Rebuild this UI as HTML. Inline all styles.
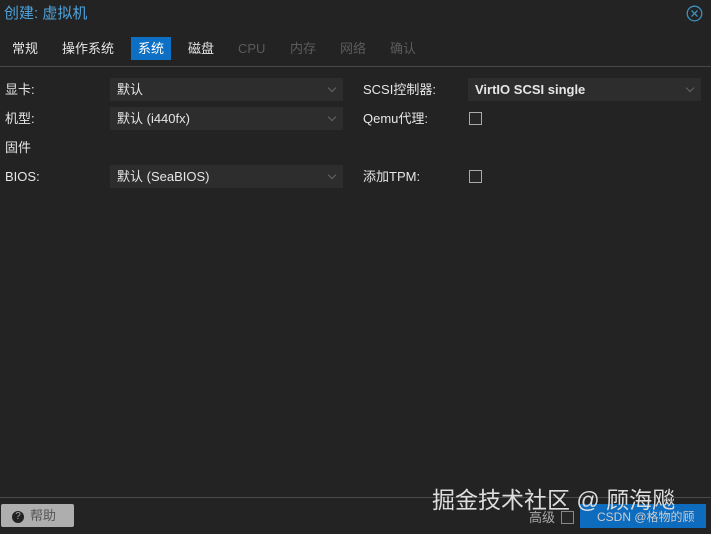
<!DOCTYPE html><html><head><meta charset="utf-8"><style>
body{margin:0;width:711px;height:534px;background:#232323;font-family:"Liberation Sans","Noto Sans CJK SC",sans-serif;color:#e6e6e6;position:relative;overflow:hidden;font-size:13px}
.a{position:absolute;white-space:nowrap;line-height:18px}
.sel{position:absolute;background:#2d2d2d;height:23px;line-height:23px;padding-left:7px;box-sizing:border-box;font-size:13px}
.sel:after{content:"";position:absolute;right:8px;top:7px;width:5px;height:5px;border-right:1px solid #666;border-bottom:1px solid #666;transform:rotate(45deg)}
.cb{position:absolute;width:11px;height:11px;border:1px solid #aaa;background:#262626}
</style></head><body>
<div class="a" style="left:4px;top:5px;font-size:15px;color:#4ea3dc">创建: 虚拟机</div>
<svg class="a" style="left:686px;top:5px" width="17" height="17"><circle cx="8.5" cy="8.5" r="7.3" fill="none" stroke="#3d8fc0" stroke-width="1.3"/><path d="M5.5 5.5L11.5 11.5M11.5 5.5L5.5 11.5" stroke="#3d8fc0" stroke-width="1.3"/></svg>
<div class="a" style="left:12px;top:40px">常规</div>
<div class="a" style="left:62px;top:40px">操作系统</div>
<div class="a" style="left:131px;top:37px;width:40px;height:23px;background:#0e70c4;color:#fff;text-align:center;line-height:23px">系统</div>
<div class="a" style="left:188px;top:40px">磁盘</div>
<div class="a" style="left:238px;top:40px;color:#5b5b5b">CPU</div>
<div class="a" style="left:290px;top:40px;color:#5b5b5b">内存</div>
<div class="a" style="left:340px;top:40px;color:#5b5b5b">网络</div>
<div class="a" style="left:390px;top:40px;color:#5b5b5b">确认</div>
<div class="a" style="left:0;top:66px;width:711px;height:1px;background:#484848"></div>
<div class="a" style="left:5px;top:81px">显卡:</div>
<div class="sel" style="left:110px;top:78px;width:233px">默认</div>
<div class="a" style="left:5px;top:110px">机型:</div>
<div class="sel" style="left:110px;top:107px;width:233px">默认 (i440fx)</div>
<div class="a" style="left:5px;top:139px">固件</div>
<div class="a" style="left:5px;top:168px">BIOS:</div>
<div class="sel" style="left:110px;top:165px;width:233px">默认 (SeaBIOS)</div>
<div class="a" style="left:363px;top:81px">SCSI控制器:</div>
<div class="sel" style="left:468px;top:78px;width:233px;font-weight:bold">VirtIO SCSI single</div>
<div class="a" style="left:363px;top:110px">Qemu代理:</div>
<div class="cb" style="left:469px;top:112px"></div>
<div class="a" style="left:363px;top:168px">添加TPM:</div>
<div class="cb" style="left:469px;top:170px"></div>
<div class="a" style="left:0;top:497px;width:711px;height:1px;background:#4a4a4a"></div>
<div class="a" style="left:1px;top:504px;width:73px;height:23px;background:#aeaeae;border-radius:2px;color:#555;line-height:23px"><span style="display:inline-block;width:12px;height:12px;border-radius:6px;background:#222;color:#aaa;font-size:10px;text-align:center;line-height:12px;margin:0 6px 0 11px;vertical-align:middle">?</span>帮助</div>
<div class="a" style="left:529px;top:509px;color:#aaa">高级</div>
<div class="cb" style="left:561px;top:511px;border-color:#888"></div>
<div class="a" style="left:580px;top:504px;width:126px;height:24px;background:#0e6cbf"></div>
<div class="a" style="left:597px;top:508px;color:#ccc;font-size:12px">CSDN @格物的顾</div>
<div class="a" style="left:432px;top:486px;font-size:23px;line-height:28px;color:#ddd">掘金技术社区 @ 顾海飚</div>
</body></html>
